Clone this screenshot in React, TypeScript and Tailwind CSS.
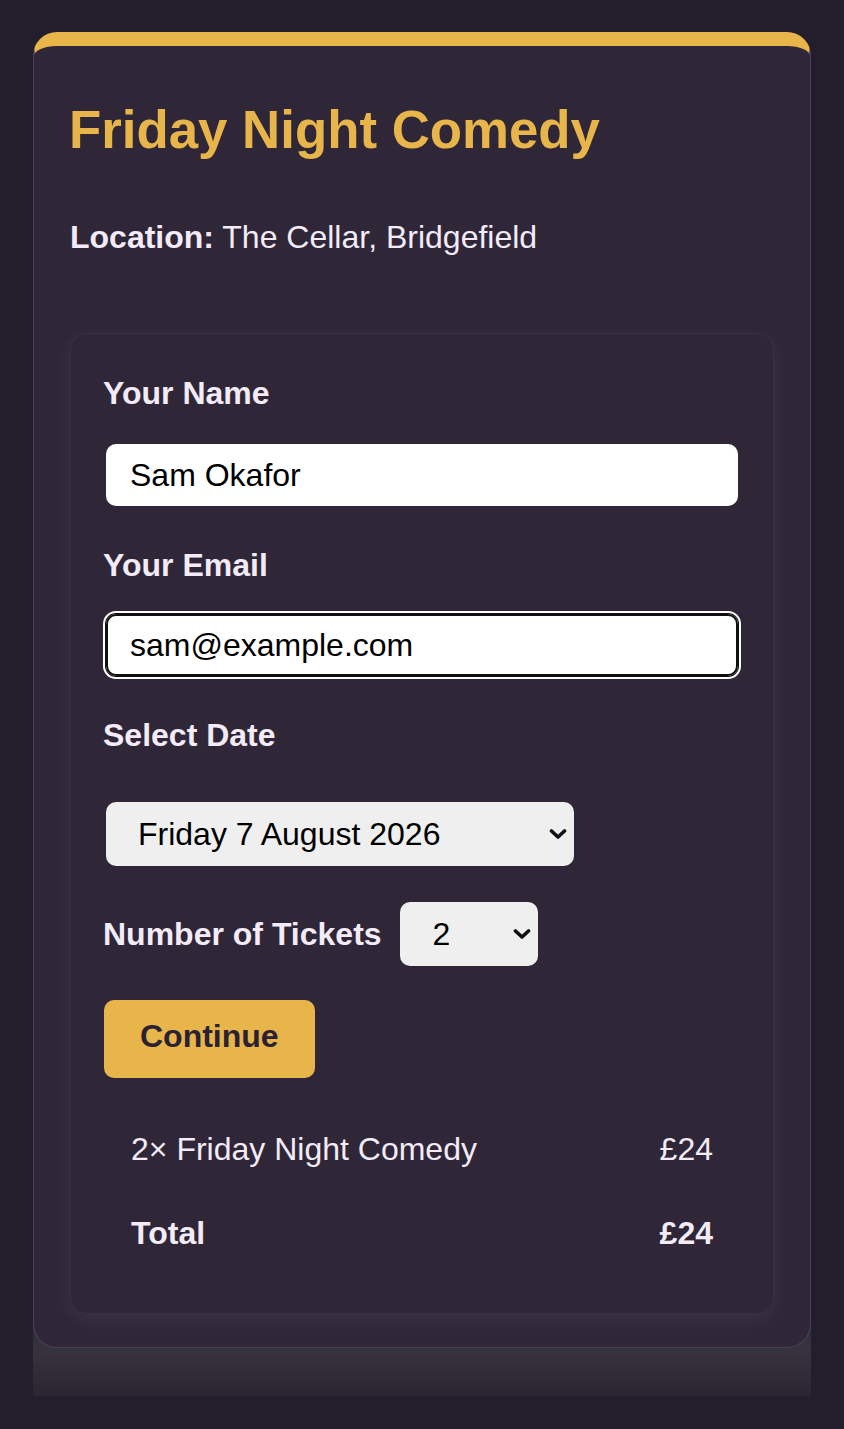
import { useState } from 'react';

function Chevron() {
  return (
    <svg
      width="18"
      height="11"
      viewBox="0 0 18 11"
      className="pointer-events-none absolute right-0 top-1/2 -translate-y-1/2"
      fill="none"
      stroke="#111"
      strokeWidth="3.6"
      strokeLinecap="round"
      strokeLinejoin="round"
    >
      <path d="M2.5 2.5 9 8.5 15.5 2.5" />
    </svg>
  );
}

export default function App() {
  const [name, setName] = useState('Sam Okafor');
  const [email, setEmail] = useState('sam@example.com');
  const [date, setDate] = useState('2026-08-07');
  const [qty, setQty] = useState('2');

  const price = 12;
  const total = price * Number(qty);

  return (
    <div className="min-h-[1429px] bg-[#221e2b] px-[33px] pt-[32px] font-['Liberation_Sans',Arial,sans-serif] text-[#f3ebf7]">
      <div className="bg-[linear-gradient(to_bottom,transparent_0,transparent_calc(100%-74px),#312d39_calc(100%-73px),#37333e_calc(100%-46px),#2a2632_calc(100%-2px),#221e2b_100%)] pb-[49px]">
        <div className="rounded-[24px] border border-[#4a4057] border-t-[14px] border-t-[#e8b54a] bg-[#2f2738] px-[36px] pb-[33px] pt-[53px]">
          <h1 className="-ml-px text-[52.8px] font-bold leading-[61px] text-[#e8b54a]">Friday Night Comedy</h1>
          <p className="mt-[59px] text-[32px] leading-[36px]">
            <span className="font-bold">Location:</span> The Cellar, Bridgefield
          </p>

          <div className="mt-[78px] rounded-[16px] border border-[#383044] bg-[#2f2738] px-[32px] pb-[62px] pt-[41px] shadow-[0_6px_18px_rgba(255,255,255,0.06)]">
            <label className="block text-[32px] font-bold leading-[36px]">Your Name</label>
            <input
              value={name}
              onChange={(e) => setName(e.target.value)}
              className="ml-[3px] mt-[33px] block h-[62px] w-[632px] rounded-[10px] bg-white px-[24px] text-[32px] text-black outline-none"
            />

            <label className="mt-[41px] block text-[32px] font-bold leading-[36px]">Your Email</label>
            <input
              value={email}
              onChange={(e) => setEmail(e.target.value)}
              className="ml-[3px] mt-[31px] block h-[62px] w-[632px] rounded-[10px] bg-white px-[24px] text-[32px] text-black outline-none shadow-[inset_0_0_0_2px_#101010,0_0_0_1px_#101010,0_0_0_3px_#ffffff]"
            />

            <label className="mt-[41px] block text-[32px] font-bold leading-[36px]">Select Date</label>
            <div className="relative ml-[3px] mt-[49px] w-[468px]">
              <select
                value={date}
                onChange={(e) => setDate(e.target.value)}
                className="block h-[64px] w-full appearance-none rounded-[10px] bg-[#efefef] pl-[32px] text-[32px] text-black outline-none"
              >
                <option value="2026-08-07">Friday 7 August 2026</option>
                <option value="2026-08-14">Friday 14 August 2026</option>
              </select>
              <span className="absolute right-[7px] top-0 h-full w-[18px]">
                <Chevron />
              </span>
            </div>

            <div className="mt-[36px] flex items-center gap-[18px]">
              <label className="text-[32px] font-bold leading-[36px]">Number of Tickets</label>
              <div className="relative w-[138px]">
                <select
                  value={qty}
                  onChange={(e) => setQty(e.target.value)}
                  className="block h-[64px] w-full appearance-none rounded-[10px] bg-[#efefef] pl-[33px] text-[32px] text-black outline-none"
                >
                  {['1', '2', '3', '4', '5', '6'].map((n) => (
                    <option key={n} value={n}>
                      {n}
                    </option>
                  ))}
                </select>
                <span className="absolute right-[7px] top-0 h-full w-[18px]">
                  <Chevron />
                </span>
              </div>
            </div>

            <button className="ml-px mt-[34px] flex h-[78px] items-center rounded-[10px] bg-[#e8b54a] px-[36px] pb-[7px] text-[32px] font-bold text-[#2a2233]">
              Continue
            </button>

            <div className="mt-[53px] flex flex-col gap-[48px] px-[28px] text-[32px] leading-[36px]">
              <div className="flex justify-between">
                <span>{qty}× Friday Night Comedy</span>
                <span>£{total}</span>
              </div>
              <div className="flex justify-between font-bold">
                <span>Total</span>
                <span>£{total}</span>
              </div>
            </div>
          </div>
        </div>
      </div>
    </div>
  );
}
